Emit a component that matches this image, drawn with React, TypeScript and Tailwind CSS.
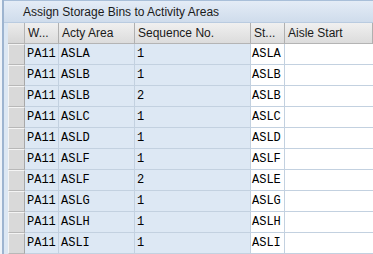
const rows = [
  ["PA11", "ASLA", "1", "ASLA"],
  ["PA11", "ASLB", "1", "ASLB"],
  ["PA11", "ASLB", "2", "ASLB"],
  ["PA11", "ASLC", "1", "ASLC"],
  ["PA11", "ASLD", "1", "ASLD"],
  ["PA11", "ASLF", "1", "ASLF"],
  ["PA11", "ASLF", "2", "ASLE"],
  ["PA11", "ASLG", "1", "ASLG"],
  ["PA11", "ASLH", "1", "ASLH"],
  ["PA11", "ASLI", "1", "ASLI"],
];

const headers = [
  { label: "W...", w: "w-[34px]" },
  { label: "Acty Area", w: "w-[76px]" },
  { label: "Sequence No.", w: "w-[116px]" },
  { label: "St...", w: "w-[34px]" },
  { label: "Aisle Start", w: "flex-1" },
];

export default function App() {
  return (
    <div className="w-[373px] h-[254px] overflow-hidden bg-white flex font-['Liberation_Sans',Arial,sans-serif]">
      {/* left frame */}
      <div className="w-[2px] bg-[#eef3f9]" />
      <div className="w-[2px] bg-[#9db4d0]" />
      <div className="flex-1 flex flex-col">
        {/* title bar */}
        <div className="h-[23px] flex items-center pl-[19px] text-[12px] text-[#1a1a1a] bg-gradient-to-b from-[#e4ecf6] to-[#cfdcec] border-t border-[#a9bfd9] border-b border-b-[#b9cbe0]">
          Assign Storage Bins to Activity Areas
        </div>
        <div className="flex-1 flex">
          <div className="w-[4px] bg-[#dce7f3]" />
          <div className="flex-1 flex flex-col">
            {/* header */}
            <div className="h-[21px] flex">
              <div className="w-[17px] bg-gradient-to-b from-[#ececec] to-[#d6d6d6] border-r border-[#b4b4b4] border-b border-b-[#b4b4b4]" />
              {headers.map((h) => (
                <div
                  key={h.label}
                  className={`${h.w} flex items-center pl-[3px] text-[12px] text-[#1a1a1a] bg-gradient-to-b from-[#f0f0f0] to-[#dcdcdc] border-r border-[#b0b0b0] border-b border-b-[#b4b4b4] whitespace-nowrap overflow-hidden`}
                >
                  {h.label}
                </div>
              ))}
            </div>
            {rows.map((r, i) => (
              <div key={i} className="h-[21px] flex text-[12px] text-black font-['Liberation_Mono','Courier_New',monospace]">
                <div className="w-[17px] bg-[#d9d9d9] border border-[#f4f4f4] border-r-[#a8a8a8] border-b-[#b8b8b8]" />
                <div className="w-[34px] flex items-center pl-[2px] bg-[#dde8f4] border-r border-b border-[#c3d1e0]">{r[0]}</div>
                <div className="w-[76px] flex items-center pl-[2px] bg-[#dde8f4] border-r border-b border-[#c3d1e0]">{r[1]}</div>
                <div className="w-[116px] flex items-center pl-[2px] bg-[#dde8f4] border-r border-b border-[#c3d1e0]">{r[2]}</div>
                <div className="w-[34px] flex items-center pl-[1px] bg-white border-r border-b border-[#c3d1e0]">{r[3]}</div>
                <div className="flex-1 bg-white border-b border-[#c3d1e0]" />
              </div>
            ))}
          </div>
        </div>
      </div>
    </div>
  );
}
